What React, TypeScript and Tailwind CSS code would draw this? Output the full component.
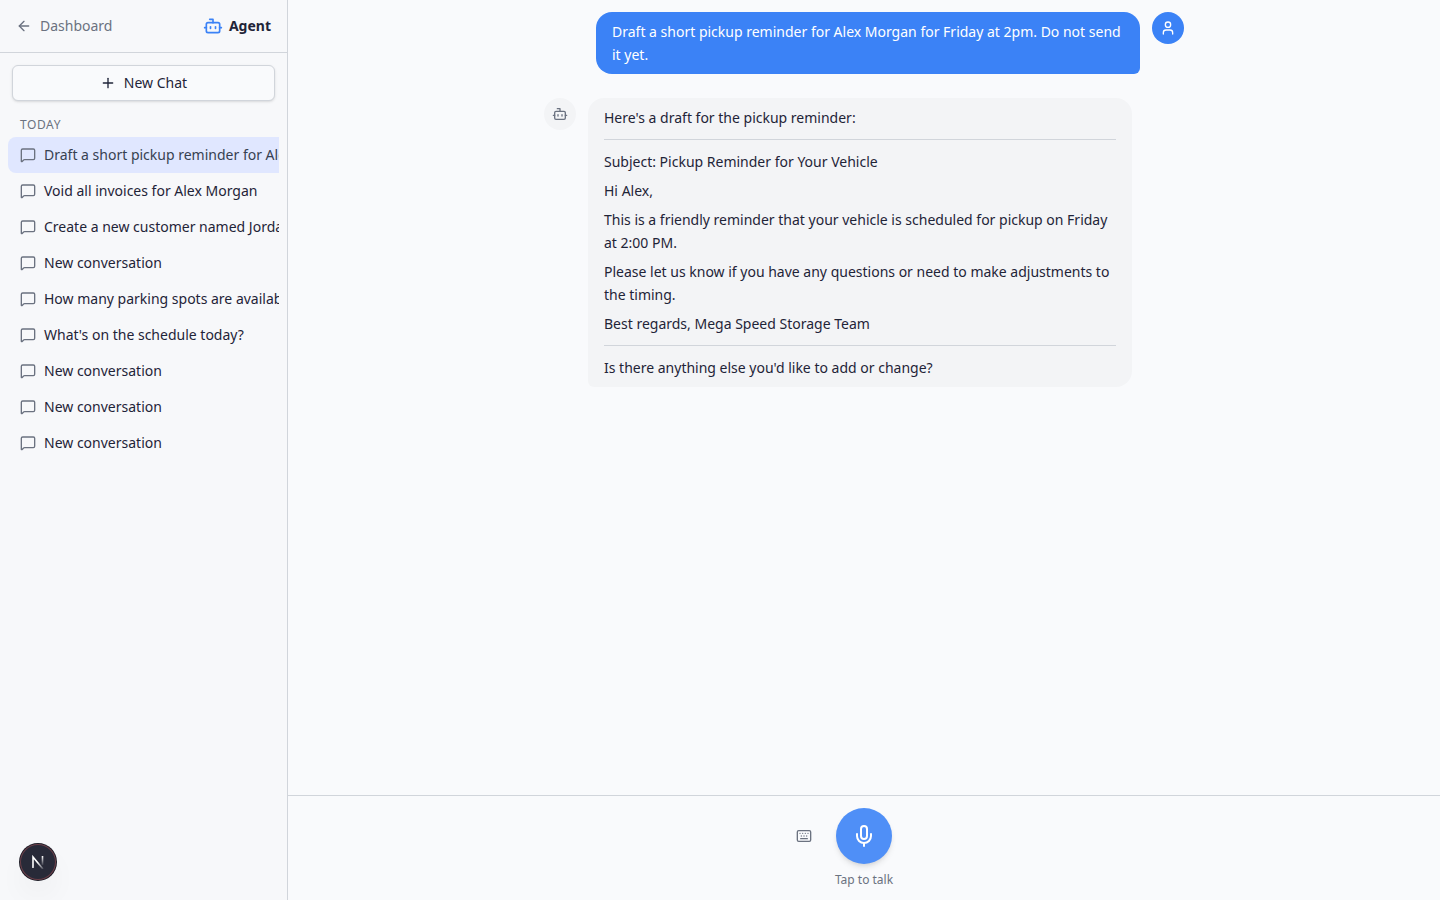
import { ArrowLeft, Bot, Keyboard, MessageSquare, Mic, Plus, User } from "lucide-react";

const CONVERSATIONS = [
  "Draft a short pickup reminder for Alex Morgan",
  "Void all invoices for Alex Morgan",
  "Create a new customer named Jordan Lee",
  "New conversation",
  "How many parking spots are available",
  "What's on the schedule today?",
  "New conversation",
  "New conversation",
  "New conversation",
];

const DRAFT = [
  "Subject: Pickup Reminder for Your Vehicle",
  "Hi Alex,",
  "This is a friendly reminder that your vehicle is scheduled for pickup on Friday at 2:00 PM.",
  "Please let us know if you have any questions or need to make adjustments to the timing.",
  "Best regards, Mega Speed Storage Team",
];

function Sidebar() {
  return (
    <aside className="flex w-72 flex-none flex-col border-r border-[#d1d5db] bg-[#f7f8fa]">
      <div className="flex items-center justify-between border-b border-[#d1d5db] px-4 py-4">
        <a href="#" className="flex items-center gap-2 text-[#6b7280]">
          <ArrowLeft className="h-4 w-4" />
          Dashboard
        </a>
        <div className="flex items-center gap-1.5 font-bold">
          <Bot className="h-5 w-5 text-[#3b82f6]" />
          Agent
        </div>
      </div>

      <div className="p-3">
        <button className="flex h-9 w-full items-center justify-center gap-2 rounded-md border border-[#d1d5db] bg-[#f9fafc] shadow-sm">
          <Plus className="h-4 w-4" />
          New Chat
        </button>
      </div>

      <nav className="flex-1 overflow-hidden px-2">
        <h2 className="px-3 text-xs leading-6 tracking-wider text-[#6b7280] uppercase">Today</h2>
        <ul className="overflow-hidden">
          {CONVERSATIONS.map((title, i) => (
            <li key={i}>
              <button
                className={`flex h-9 w-max min-w-full items-center gap-2 rounded-lg px-3 text-left whitespace-nowrap ${
                  i === 0 ? "bg-[#e0e7ff] text-[#374151]" : ""
                }`}
              >
                <MessageSquare className="h-4 w-4 flex-none text-[#6b7280]" />
                {title}
              </button>
            </li>
          ))}
        </ul>
      </nav>
    </aside>
  );
}

function DevBadge() {
  return (
    <button
      aria-label="Open dev tools"
      className="fixed bottom-5 left-5 flex h-9 w-9 items-center justify-center rounded-full bg-[#282a38] shadow-[0_0_0_1px_#1b1a24,inset_0_0_0_1px_#6b3f48,0_16px_32px_-8px_rgba(0,0,0,0.12)]"
    >
      <svg width="14" height="14" viewBox="0 0 14 14" fill="none" strokeWidth="1.6">
        <defs>
          <linearGradient id="stem" x1="0" y1="1" x2="0" y2="10" gradientUnits="userSpaceOnUse">
            <stop stopColor="#fff" />
            <stop offset="1" stopColor="#fff" stopOpacity="0.1" />
          </linearGradient>
          <linearGradient id="slash" x1="7" y1="7" x2="13" y2="14" gradientUnits="userSpaceOnUse">
            <stop stopColor="#fff" />
            <stop offset="1" stopColor="#fff" stopOpacity="0.1" />
          </linearGradient>
        </defs>
        <path d="M2 13V2L12 14" stroke="url(#slash)" />
        <path d="M11.5 1V10" stroke="url(#stem)" />
      </svg>
    </button>
  );
}

export default function App() {
  return (
    <div className="flex h-screen bg-[#f9fafc] font-['Noto_Sans',sans-serif] text-sm text-[#1f2438]">
      <Sidebar />

      <main className="flex min-w-0 flex-1 flex-col">
        <div className="flex-1 overflow-y-auto p-3">
          <div className="mx-auto flex max-w-[640px] flex-col gap-6 leading-[23px]">
            <div className="flex justify-end gap-3">
              <div className="max-w-[85%] rounded-2xl rounded-br-md bg-[#3b82f6] px-4 py-2 text-white">
                Draft a short pickup reminder for Alex Morgan for Friday at 2pm. Do not send it yet.
              </div>
              <div className="flex h-8 w-8 flex-none items-center justify-center rounded-full bg-[#3b82f6] text-white">
                <User className="h-4 w-4" />
              </div>
            </div>

            <div className="flex gap-3">
              <div className="flex h-8 w-8 flex-none items-center justify-center rounded-full bg-[#f3f4f6] text-[#6b7280]">
                <Bot className="h-4 w-4" />
              </div>
              <div className="max-w-[85%] rounded-2xl rounded-bl-md bg-[#f3f4f6] px-4 py-2">
                <p>Here's a draft for the pickup reminder:</p>
                <hr className="my-2.5 border-[#d1d5db]" />
                <div className="flex flex-col gap-1.5">
                  {DRAFT.map((line) => (
                    <p key={line}>{line}</p>
                  ))}
                </div>
                <hr className="my-2.5 border-[#d1d5db]" />
                <p>Is there anything else you'd like to add or change?</p>
              </div>
            </div>
          </div>
        </div>

        <div className="flex flex-col items-center gap-2 border-t border-[#d1d5db] p-3">
          <div className="grid grid-cols-[40px_56px_40px] items-center gap-3">
            <button
              aria-label="Type a message"
              className="flex h-10 w-10 items-center justify-center text-[#6b7280]"
            >
              <Keyboard className="h-4 w-4" />
            </button>
            <button
              aria-label="Tap to talk"
              className="flex h-14 w-14 items-center justify-center rounded-full bg-[#4f8ff7] text-white shadow-md"
            >
              <Mic className="h-6 w-6" />
            </button>
          </div>
          <p className="text-xs text-[#6b7280]">Tap to talk</p>
        </div>
      </main>

      <DevBadge />
    </div>
  );
}
